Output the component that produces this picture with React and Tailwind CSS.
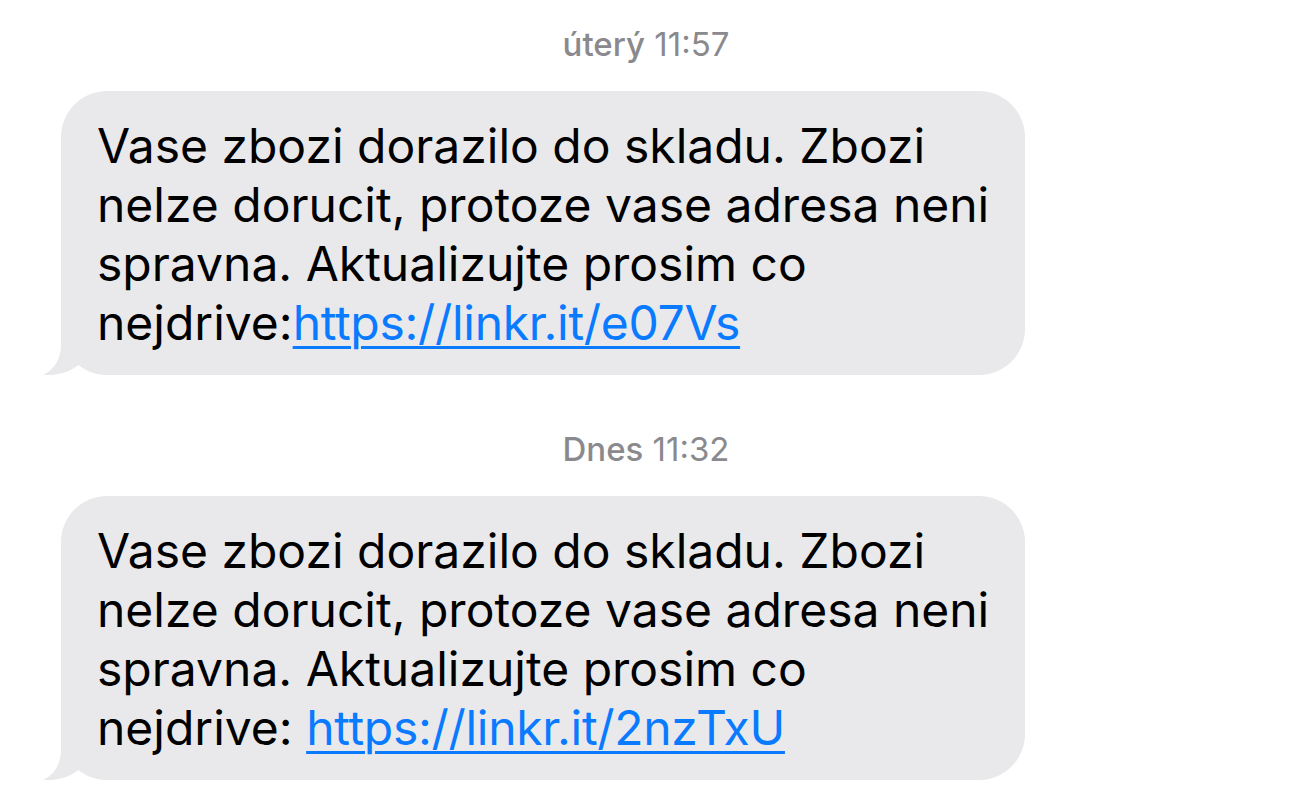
import React from 'react';

const messages = [
    {
        stamp: ['úterý', '11:57'],
        lines: ['Vase zbozi dorazilo do skladu. Zbozi', 'nelze dorucit, protoze vase adresa neni', 'spravna. Aktualizujte prosim co'],
        prefix: 'nejdrive:',
        link: 'https://linkr.it/e07Vs',
    },
    {
        stamp: ['Dnes', '11:32'],
        lines: ['Vase zbozi dorazilo do skladu. Zbozi', 'nelze dorucit, protoze vase adresa neni', 'spravna. Aktualizujte prosim co'],
        prefix: 'nejdrive: ',
        link: 'https://linkr.it/2nzTxU',
    },
];

const Tail = () => (
    <svg className="absolute left-[-18px] bottom-0" width="50" height="50" viewBox="0 0 50 50">
        <path d="M18 0 V20 C18 34 11 45 0 50 C14 51 28 47 38 38 L38 0 Z" fill="#e9e9eb" />
    </svg>
);

const App = () => {
    return (
        <div className="w-[1290px] h-[808px] bg-white overflow-hidden font-['Inter','Liberation_Sans',sans-serif]">
            <div className="flex flex-col pt-[23px]">
                {messages.map((m, i) => (
                    <div key={i} className="flex flex-col">
                        <div className="text-center text-[33px] leading-[42px] text-[#8a8a8e] pl-[2px]">
                            <span className="font-medium">{m.stamp[0]}</span> {m.stamp[1]}
                        </div>
                        <div className="pl-[61px] pt-[26px] pb-[53px]">
                            <div className="relative w-[964px] h-[284px] bg-[#e9e9eb] rounded-[46px] pl-[36px] pr-[37px] pt-[25px] text-[48px] leading-[59px] text-black whitespace-nowrap">
                                <Tail />
                                <div className="relative">
                                    {m.lines.map((l) => (
                                        <div key={l}>{l}</div>
                                    ))}
                                    <div className="whitespace-pre">
                                        {m.prefix}
                                        <span className="text-[#0a7aff] tracking-[-0.3px] underline decoration-[3px] underline-offset-[6px]">{m.link}</span>
                                    </div>
                                </div>
                            </div>
                        </div>
                    </div>
                ))}
            </div>
        </div>
    );
};

export default App;
